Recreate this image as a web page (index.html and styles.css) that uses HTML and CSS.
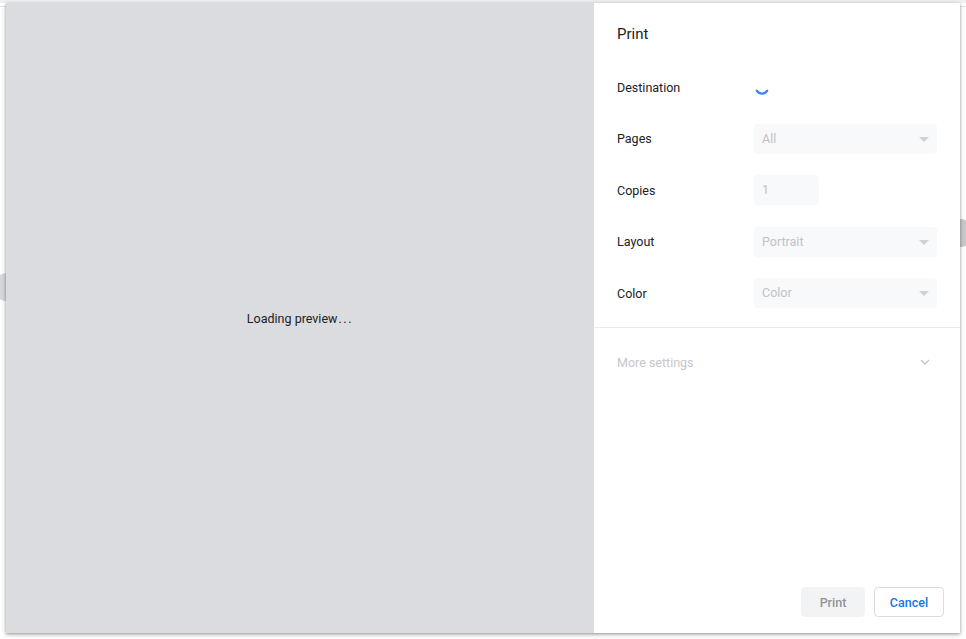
FILE: index.html
```html
<!DOCTYPE html>
<html lang="en">
<head>
  <meta charset="UTF-8">
  <title>Print</title>
  <link rel="stylesheet" href="styles.css">
</head>
<body>
  <div class="backdrop">
    <div class="topbar"></div>
    <div class="rule"></div>
    <div class="blob blob-left"></div>
    <div class="blob blob-right"></div>
  </div>

  <div class="dialog">
    <div class="preview">
      <span>Loading preview<span class="dots">...</span></span>
    </div>

    <div class="sidebar">
      <h1 class="title">Print</h1>

      <div class="settings">
        <div class="row">
          <span class="label">Destination</span>
          <svg class="spinner" width="16" height="16" viewBox="0 0 16 16">
            <path d="M2.8 10.6 A6 6 0 0 0 13.2 10.6" fill="none" stroke="#4285f4" stroke-width="2.2" stroke-linecap="round"/>
          </svg>
        </div>
        <div class="row">
          <span class="label">Pages</span>
          <div class="select">All<span class="caret"></span></div>
        </div>
        <div class="row">
          <span class="label">Copies</span>
          <div class="input">1</div>
        </div>
        <div class="row">
          <span class="label">Layout</span>
          <div class="select">Portrait<span class="caret"></span></div>
        </div>
        <div class="row">
          <span class="label">Color</span>
          <div class="select">Color<span class="caret"></span></div>
        </div>
      </div>

      <div class="more">
        <span>More settings</span>
        <svg width="12" height="12" viewBox="0 0 12 12">
          <path d="M2 4 L6 8 L10 4" fill="none" stroke="#c4c7cb" stroke-width="1.4"/>
        </svg>
      </div>

      <div class="buttons">
        <button class="btn btn-print">Print</button>
        <button class="btn btn-cancel">Cancel</button>
      </div>
    </div>
  </div>
</body>
</html>
```

FILE: styles.css
```css
html, body {
  margin: 0;
  height: 100%;
  overflow: hidden;
}
body {
  font-family: Roboto, "Liberation Sans", Arial, sans-serif;
  font-size: 13px;
  color: #202124;
  background: #fff;
  position: relative;
}

/* page behind the dialog */
.backdrop .topbar {
  height: 3px;
  background: #eeeff0;
}
.backdrop .rule {
  position: absolute;
  top: 6px;
  left: 0;
  right: 0;
  height: 1px;
  background: #e2e3e5;
}
.blob {
  position: absolute;
  width: 28px;
  height: 28px;
  border-radius: 50%;
}
.blob-left { left: -7px; top: 273px; background: #d7d8da; }
.blob-right { right: -8px; top: 219px; background: #c9cacc; }

.dialog {
  position: relative;
  margin: 0 6px;
  width: 954px;
  height: 630px;
  display: grid;
  grid-template-columns: 588px 1fr;
  box-shadow: 0 1px 3px rgba(0,0,0,0.35), 0 2px 6px rgba(0,0,0,0.12);
}

.preview {
  background: #dadce0;
  display: flex;
  align-items: center;
  justify-content: center;
  font-size: 12.5px;
  color: #202124;
}
.dots {
  letter-spacing: 1.6px;
  margin-left: 1px;
}

.sidebar {
  background: #fff;
  display: flex;
  flex-direction: column;
}
.title {
  margin: 21px 0 0 23px;
  font-size: 15px;
  font-weight: 400;
  line-height: 20px;
  color: #202124;
}

.settings {
  margin-top: 28px;
  padding: 0 23px;
  display: flex;
  flex-direction: column;
  gap: 21.5px;
}
.row {
  display: flex;
  align-items: center;
  height: 30px;
}
.label {
  width: 137px;
  flex-shrink: 0;
  font-size: 12.5px;
}
.spinner {
  margin-top: 1px;
}
.select, .input {
  height: 30px;
  line-height: 30px;
  background: #f8f9fa;
  border-radius: 4px;
  padding: 0 8px;
  color: #c0c3c6;
  font-size: 12.5px;
  box-sizing: border-box;
}
.select {
  width: 183px;
  position: relative;
}
.input {
  width: 65px;
}
.caret {
  position: absolute;
  right: 8px;
  top: 13px;
  border-left: 5px solid transparent;
  border-right: 5px solid transparent;
  border-top: 5px solid #cfd1d4;
}

.more {
  margin-top: 19px;
  border-top: 1px solid #e8eaed;
  height: 68px;
  padding: 0 29px 0 23px;
  display: flex;
  align-items: center;
  justify-content: space-between;
  color: #c4c7cb;
  font-size: 12.5px;
}

.buttons {
  margin-top: auto;
  padding: 0 16px 16px 0;
  display: flex;
  justify-content: flex-end;
  gap: 9px;
}
.btn {
  font-family: inherit;
  font-size: 12.5px;
  font-weight: 500;
  height: 30px;
  border-radius: 4px;
  cursor: pointer;
}
.btn-print {
  width: 64px;
  background: #f1f3f4;
  border: 1px solid #f1f3f4;
  color: #8f949a;
}
.btn-cancel {
  width: 70px;
  background: #fff;
  border: 1px solid #dadce0;
  color: #1a73e8;
}
```
